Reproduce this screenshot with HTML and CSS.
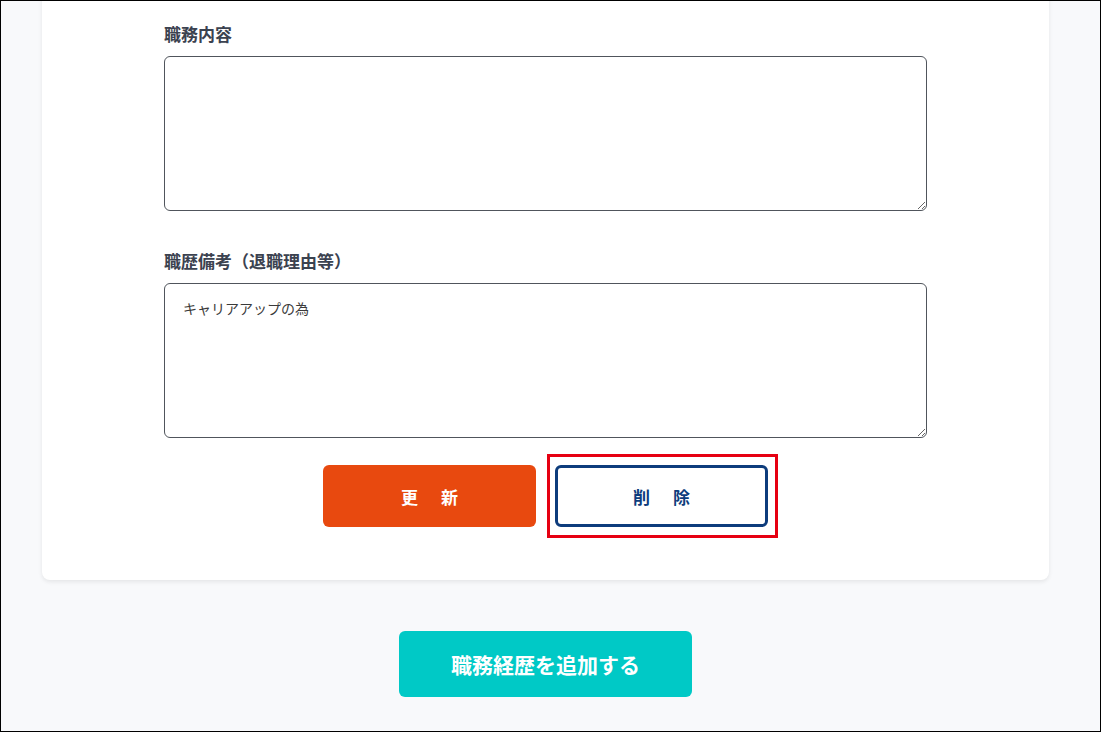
FILE: index.html
```html
<!DOCTYPE html>
<html lang="ja">
<head>
<meta charset="utf-8">
<title>職務経歴</title>
<link rel="stylesheet" href="styles.css">
</head>
<body>
<div class="frame">
  <div class="card">
    <div class="form">
      <div class="field">
        <label class="label">職務内容</label>
        <textarea class="textarea"></textarea>
      </div>
      <div class="field">
        <label class="label">職歴備考（退職理由等）</label>
        <textarea class="textarea">キャリアアップの為</textarea>
      </div>
      <div class="actions">
        <button class="btn btn-update">更　新</button>
        <button class="btn btn-delete">削　除</button>
      </div>
    </div>
  </div>
  <div class="add-row">
    <button class="btn-add">職務経歴を追加する</button>
  </div>
</div>
</body>
</html>
```
FILE: styles.css
```css
* { box-sizing: border-box; }
html, body { margin: 0; padding: 0; }
body {
  font-family: "Noto Sans CJK JP", "Noto Sans", sans-serif;
  background: #fff;
}
.frame {
  width: 1101px;
  height: 732px;
  border: 1px solid #000;
  background: #f8f9fb;
  overflow: hidden;
  padding: 0 51px 0 41px;
}
.card {
  margin-top: -20px;
  padding: 41px 0 53px;
  background: #fff;
  border-radius: 8px;
  box-shadow: 0 2px 4px rgba(0, 0, 0, 0.08);
}
.form {
  width: 763px;
  margin: 0 auto;
  display: flex;
  flex-direction: column;
  gap: 38px;
}
.field {
  display: flex;
  flex-direction: column;
  gap: 10px;
}
.label {
  font-size: 17px;
  line-height: 24px;
  font-weight: 700;
  color: #3b4250;
}
.textarea {
  display: block;
  width: 100%;
  height: 155px;
  border: 1px solid #50555c;
  border-radius: 6px;
  padding: 13px 18px 12px;
  font-family: "Noto Sans CJK JP", "Noto Sans", sans-serif;
  font-size: 14px;
  line-height: 22px;
  color: #3a3a3a;
  background: #fff;
  resize: vertical;
  outline: none;
}
.actions {
  margin-top: -11px;
  display: flex;
  justify-content: center;
  gap: 19px;
}
.btn {
  width: 213px;
  height: 62px;
  border-radius: 6px;
  font-family: "Noto Sans CJK JP", "Noto Sans", sans-serif;
  font-size: 17px;
  font-weight: 700;
  letter-spacing: 3px;
  padding: 0 0 0 3px;
  cursor: pointer;
}
.btn-update {
  background: #e8490f;
  border: none;
  color: #fff;
}
.btn-delete {
  position: relative;
  background: #fff;
  border: 3px solid #0d3c7c;
  color: #0d3c7c;
}
.btn-delete::after {
  content: "";
  position: absolute;
  top: -14px;
  left: -11px;
  right: -13px;
  bottom: -14px;
  border: 3px solid #e60012;
  pointer-events: none;
}
.add-row {
  display: flex;
  justify-content: center;
  padding-top: 51px;
}
.btn-add {
  width: 293px;
  height: 66px;
  border: none;
  border-radius: 6px;
  background: #00c9c6;
  color: #fff;
  font-family: "Noto Sans CJK JP", "Noto Sans", sans-serif;
  font-size: 21px;
  font-weight: 700;
  cursor: pointer;
}
```
